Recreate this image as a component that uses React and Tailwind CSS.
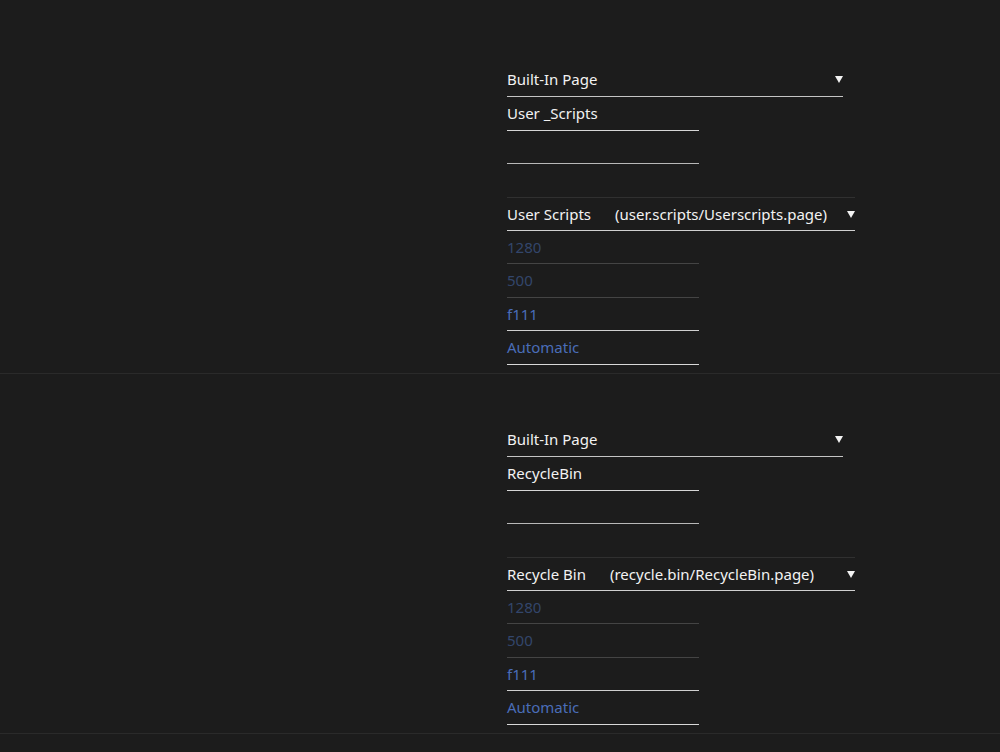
const sections = [
  {
    page: 'User _Scripts',
    name: 'User Scripts',
    path: '(user.scripts/Userscripts.page)',
  },
  {
    page: 'RecycleBin',
    name: 'Recycle Bin',
    path: '(recycle.bin/RecycleBin.page)',
  },
];

const Caret = () => (
  <svg width="8" height="7" viewBox="0 0 8 7" className="shrink-0">
    <path d="M0 0h8L4 7z" fill="#f2f2f2" />
  </svg>
);

const Section = ({ page, name, path }) => (
  <div className="pt-[49px] pb-[8px] border-b border-[#2a2a2a]">
    <div className="ml-[507px] flex flex-col text-[15px] text-[#f2f2f2]">
      <div className="h-[34px] w-[336px] flex items-center justify-between border-b border-[#c4c4c4]">
        <span>Built-In Page</span>
        <Caret />
      </div>
      <div className="h-[34px] w-[192px] flex items-center border-b border-[#d6d6d6]">
        <span>{page}</span>
      </div>
      <div className="h-[33px] w-[192px] border-b border-[#b8b8b8]" />
      <div className="h-[34px] w-[348px] border-b border-[#303030]" />
      <div className="h-[33px] w-[348px] flex items-center justify-between border-b border-[#d0d0d0]">
        <span>
          {name}
          <span className="ml-[24px]">{path}</span>
        </span>
        <Caret />
      </div>
      <div className="h-[33px] w-[192px] flex items-center border-b border-[#444444] text-[#33466b]">
        <span>1280</span>
      </div>
      <div className="h-[34px] w-[192px] flex items-center border-b border-[#444444] text-[#33466b]">
        <span>500</span>
      </div>
      <div className="h-[33px] w-[192px] flex items-center border-b border-[#cfcfcf] text-[#4a6db8]">
        <span>f111</span>
      </div>
      <div className="h-[34px] w-[192px] flex items-center border-b border-[#d8d8d8] text-[#4a6db8]">
        <span>Automatic</span>
      </div>
    </div>
  </div>
);

export default function App() {
  return (
    <div
      className="min-h-[752px] bg-[#1c1c1c] pt-[14px]"
      style={{ fontFamily: '"Noto Sans", "Open Sans", sans-serif' }}
    >
      {sections.map((s) => (
        <Section key={s.name} {...s} />
      ))}
    </div>
  );
}
